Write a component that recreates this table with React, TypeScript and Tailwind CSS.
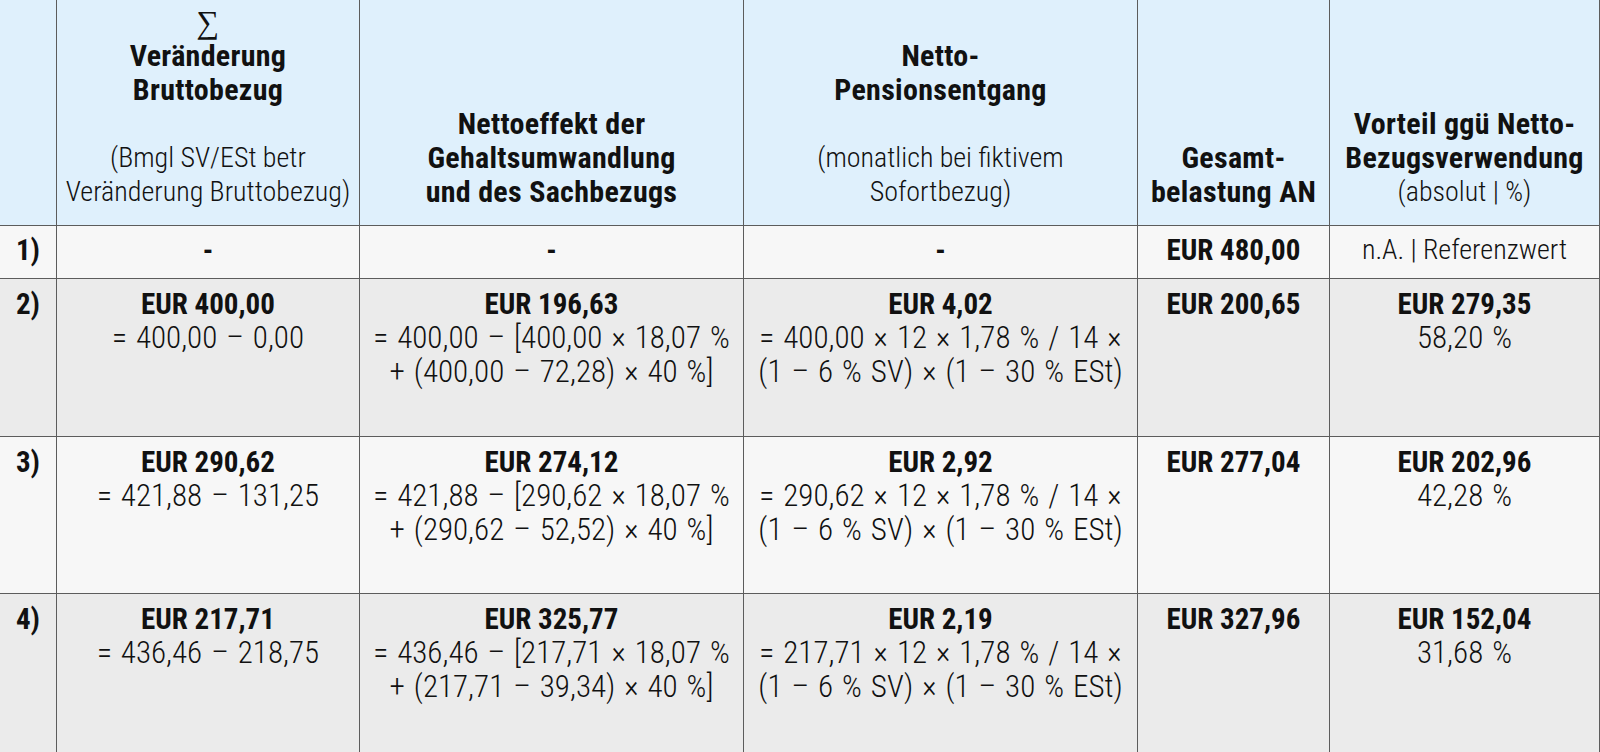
import React from 'react'

type Cell = { bold: string; lines: string[] }

const rows: { label: string; bg: string; cells: Cell[]; total: string; vorteil: string[] }[] = [
  {
    label: '2)',
    bg: 'bg-[#ebebeb]',
    cells: [
      { bold: 'EUR 400,00', lines: ['= 400,00 – 0,00'] },
      { bold: 'EUR 196,63', lines: ['= 400,00 – [400,00 × 18,07 %', '+ (400,00 – 72,28) × 40 %]'] },
      { bold: 'EUR 4,02', lines: ['= 400,00 × 12 × 1,78 % / 14 ×', '(1 – 6 % SV) × (1 – 30 % ESt)'] },
    ],
    total: 'EUR 200,65',
    vorteil: ['EUR 279,35', '58,20 %'],
  },
  {
    label: '3)',
    bg: 'bg-[#f7f7f7]',
    cells: [
      { bold: 'EUR 290,62', lines: ['= 421,88 – 131,25'] },
      { bold: 'EUR 274,12', lines: ['= 421,88 – [290,62 × 18,07 %', '+ (290,62 – 52,52) × 40 %]'] },
      { bold: 'EUR 2,92', lines: ['= 290,62 × 12 × 1,78 % / 14 ×', '(1 – 6 % SV) × (1 – 30 % ESt)'] },
    ],
    total: 'EUR 277,04',
    vorteil: ['EUR 202,96', '42,28 %'],
  },
  {
    label: '4)',
    bg: 'bg-[#ebebeb]',
    cells: [
      { bold: 'EUR 217,71', lines: ['= 436,46 – 218,75'] },
      { bold: 'EUR 325,77', lines: ['= 436,46 – [217,71 × 18,07 %', '+ (217,71 – 39,34) × 40 %]'] },
      { bold: 'EUR 2,19', lines: ['= 217,71 × 12 × 1,78 % / 14 ×', '(1 – 6 % SV) × (1 – 30 % ESt)'] },
    ],
    total: 'EUR 327,96',
    vorteil: ['EUR 152,04', '31,68 %'],
  },
]

const head = 'flex flex-col justify-end items-center text-center bg-[#dff0fc] pb-4 whitespace-nowrap'
const hb = 'font-bold text-[30px] tracking-[0.3px]'
const hr = 'text-[28px]'
const body = 'flex flex-col items-center text-center pt-2 whitespace-nowrap'
const formula = 'text-[31px] [word-spacing:2px]'

export default function App() {
  return (
    <div className="w-[1600px] h-[752px] overflow-hidden bg-white">
      <div className="grid grid-cols-[56px_302px_383px_393px_191px_269px] grid-rows-[225px_52px_157px_156px_158px] gap-px pr-px bg-[#5c5c5c] text-[29px] leading-[34px] font-light text-[#111] font-['Roboto_Condensed','Liberation_Sans_Narrow','DejaVu_Sans_Condensed','Roboto',sans-serif]">
        {/* header */}
        <div className="bg-[#dff0fc]" />
        <div className={head}>
          <span className="font-['Liberation_Serif','DejaVu_Serif',serif] font-normal text-[32px]">∑</span>
          <span className={hb}>Veränderung</span>
          <span className={hb}>Bruttobezug</span>
          <span>&nbsp;</span>
          <span className={hr}>(Bmgl SV/ESt betr</span>
          <span className={hr}>Veränderung Bruttobezug)</span>
        </div>
        <div className={head}>
          <span className={hb}>Nettoeffekt der</span>
          <span className={hb}>Gehaltsumwandlung</span>
          <span className={hb}>und des Sachbezugs</span>
        </div>
        <div className={head}>
          <span className={hb}>Netto-</span>
          <span className={hb}>Pensionsentgang</span>
          <span>&nbsp;</span>
          <span className={hr}>(monatlich bei fiktivem</span>
          <span className={hr}>Sofortbezug)</span>
        </div>
        <div className={head}>
          <span className={hb}>Gesamt-</span>
          <span className={hb}>belastung AN</span>
        </div>
        <div className={head}>
          <span className={hb}>Vorteil ggü Netto-</span>
          <span className={hb}>Bezugsverwendung</span>
          <span className={hr}>(absolut | %)</span>
        </div>

        {/* row 1 */}
        <div className="bg-[#f7f7f7] flex justify-center pt-[7px] font-bold">1)</div>
        <div className="bg-[#f7f7f7] flex justify-center pt-[7px] font-bold">-</div>
        <div className="bg-[#f7f7f7] flex justify-center pt-[7px] font-bold">-</div>
        <div className="bg-[#f7f7f7] flex justify-center pt-[7px] font-bold">-</div>
        <div className="bg-[#f7f7f7] flex justify-center pt-[7px] font-bold">EUR 480,00</div>
        <div className="bg-[#f7f7f7] flex justify-center pt-[7px] text-[28px]">n.A. | Referenzwert</div>

        {rows.map((r) => (
          <React.Fragment key={r.label}>
            <div className={`${r.bg} ${body} font-bold`}>{r.label}</div>
            {r.cells.map((c) => (
              <div key={c.bold} className={`${r.bg} ${body}`}>
                <span className="font-bold">{c.bold}</span>
                {c.lines.map((l) => (
                  <span key={l} className={formula}>{l}</span>
                ))}
              </div>
            ))}
            <div className={`${r.bg} ${body} font-bold`}>{r.total}</div>
            <div className={`${r.bg} ${body}`}>
              <span className="font-bold">{r.vorteil[0]}</span>
              <span className={formula}>{r.vorteil[1]}</span>
            </div>
          </React.Fragment>
        ))}
      </div>
    </div>
  )
}
